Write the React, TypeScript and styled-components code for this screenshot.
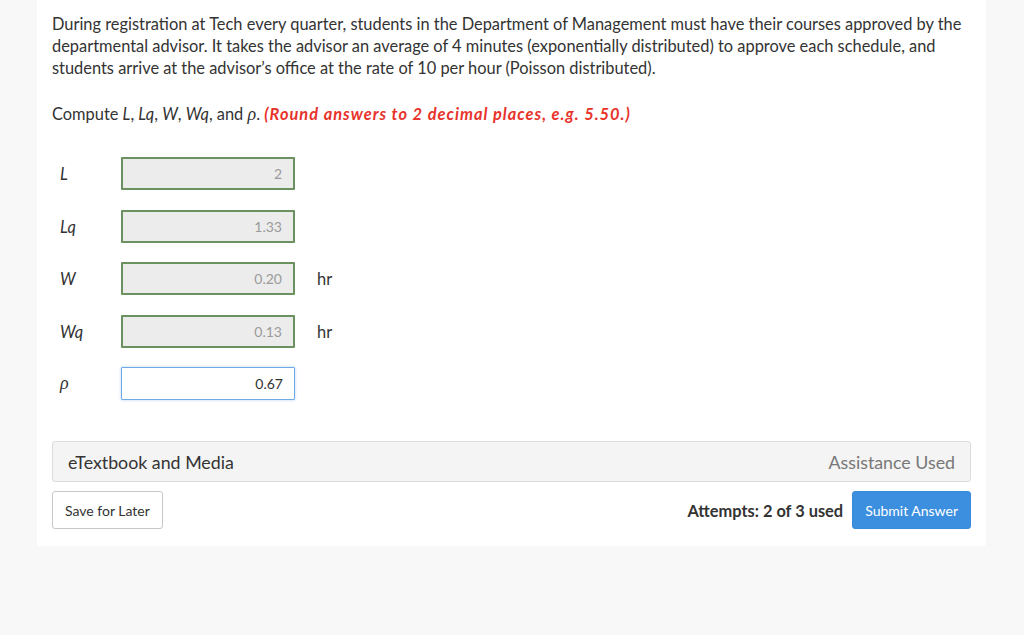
import React from 'react';
import styled, { createGlobalStyle } from 'styled-components';

const Global = createGlobalStyle`
  html, body {
    margin: 0;
    padding: 0;
    background: #f8f8f8;
  }
  body {
    font-family: Lato, "Open Sans", sans-serif;
    color: #333;
  }
`;

const Card = styled.section`
  margin-left: 37px;
  width: 949px;
  box-sizing: border-box;
  padding: 13px 15px 17px 15px;
  background: #fff;
  border-radius: 0 0 3px 3px;
`;

const Para = styled.p`
  margin: 0;
  font-size: 16.4px;
  line-height: 22px;
  color: #333;
`;

const Prompt = styled(Para)`
  margin-top: 24px;
`;

const Var = styled.i`
  font-style: italic;
`;

const Rho = styled.span`
  font-family: "Liberation Serif", "DejaVu Serif", serif;
  font-style: italic;
  font-size: 18px;
`;

const Hint = styled.strong`
  color: #e8332b;
  font-style: italic;
  font-weight: 700;
  letter-spacing: 1px;
`;

const Fields = styled.div`
  margin-top: 32px;
  display: flex;
  flex-direction: column;
  gap: 19.6px;
`;

const Row = styled.div`
  display: flex;
  align-items: center;
  height: 33px;
`;

const Label = styled.span<{ $serif?: boolean }>`
  width: 69px;
  box-sizing: border-box;
  padding-left: 8px;
  font-size: ${(p) => (p.$serif ? '18px' : '16.4px')};
  font-style: italic;
  font-family: ${(p) =>
    p.$serif ? '"Liberation Serif", "DejaVu Serif", serif' : 'Lato, sans-serif'};
  color: #333;
`;

const Field = styled.div<{ $active?: boolean }>`
  width: 174px;
  height: 33px;
  box-sizing: border-box;
  display: flex;
  align-items: center;
  justify-content: flex-end;
  padding-right: 11px;
  font-size: 14px;
  border-radius: 1px;
  border: ${(p) => (p.$active ? '1px solid #6fa9e6' : '2px solid #6b9160')};
  background: ${(p) => (p.$active ? '#fff' : '#ececec')};
  color: ${(p) => (p.$active ? '#333' : '#9a9a9a')};
  box-shadow: ${(p) => (p.$active ? '0 0 3px rgba(111,169,230,0.5)' : 'none')};
`;

const Unit = styled.span`
  margin-left: 22px;
  font-size: 16.4px;
  color: #333;
`;

const MediaBar = styled.div`
  margin-top: 41px;
  height: 41px;
  box-sizing: border-box;
  display: flex;
  align-items: center;
  justify-content: space-between;
  padding: 0 15px;
  background: #f4f4f4;
  border: 1px solid #dcdcdc;
  border-radius: 3px;
  font-size: 17.8px;
`;

const MediaTitle = styled.span`
  color: #333;
`;

const Assist = styled.span`
  color: #777;
`;

const Actions = styled.div`
  margin-top: 9px;
  display: flex;
  align-items: center;
`;

const Button = styled.button<{ $primary?: boolean }>`
  height: 38px;
  box-sizing: border-box;
  padding: 0 12px;
  font-family: Lato, sans-serif;
  font-size: 14px;
  border-radius: 3px;
  cursor: pointer;
  border: 1px solid ${(p) => (p.$primary ? '#3a8bdb' : '#c8c8c8')};
  background: ${(p) => (p.$primary ? '#3c8fdf' : '#fff')};
  color: ${(p) => (p.$primary ? '#fff' : '#333')};
`;

const Attempts = styled.span`
  margin-left: auto;
  margin-right: 9px;
  font-weight: 700;
  font-size: 16.4px;
  color: #333;
`;

const rows = [
  { label: 'L', value: '2' },
  { label: 'Lq', value: '1.33' },
  { label: 'W', value: '0.20', unit: 'hr' },
  { label: 'Wq', value: '0.13', unit: 'hr' },
  { label: 'ρ', value: '0.67', active: true, serif: true },
];

export default function App() {
  return (
    <>
      <Global />
      <Card>
        <Para>
          During registration at Tech every quarter, students in the Department of Management must have
          their courses approved by the departmental advisor. It takes the advisor an average of 4 minutes
          (exponentially distributed) to approve each schedule, and students arrive at the advisor’s office at
          the rate of 10 per hour (Poisson distributed).
        </Para>
        <Prompt>
          Compute <Var>L</Var>, <Var>Lq</Var>, <Var>W</Var>, <Var>Wq</Var>, and <Rho>ρ</Rho>.{' '}
          <Hint>(Round answers to 2 decimal places, e.g. 5.50.)</Hint>
        </Prompt>
        <Fields>
          {rows.map((r) => (
            <Row key={r.label}>
              <Label $serif={r.serif}>{r.label}</Label>
              <Field $active={r.active}>{r.value}</Field>
              {r.unit && <Unit>{r.unit}</Unit>}
            </Row>
          ))}
        </Fields>
        <MediaBar>
          <MediaTitle>eTextbook and Media</MediaTitle>
          <Assist>Assistance Used</Assist>
        </MediaBar>
        <Actions>
          <Button>Save for Later</Button>
          <Attempts>Attempts: 2 of 3 used</Attempts>
          <Button $primary>Submit Answer</Button>
        </Actions>
      </Card>
    </>
  );
}
